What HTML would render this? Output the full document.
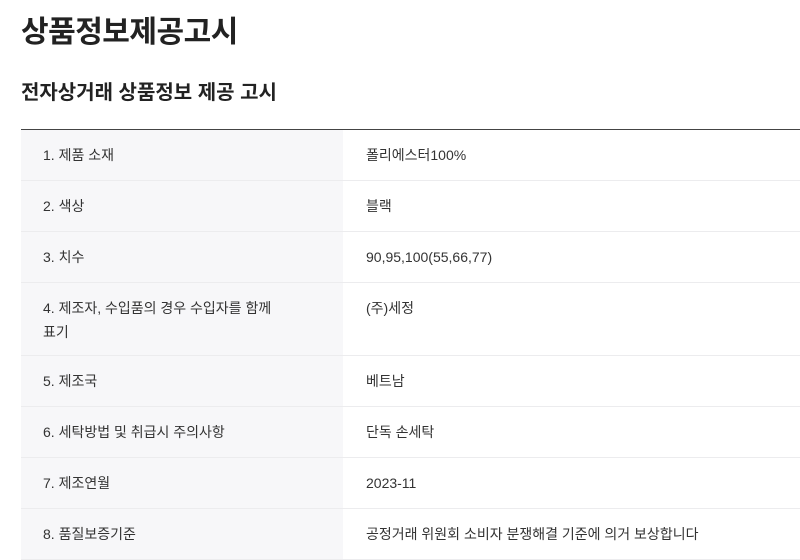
<!DOCTYPE html>
<html><head><meta charset="utf-8"><style>
*{margin:0;padding:0;box-sizing:border-box}
body{width:800px;height:537px;overflow:hidden;background:#fff;font-family:"Liberation Sans","Noto Sans CJK KR",sans-serif;color:#222}
h1{position:absolute;left:21px;top:12px;font-size:30px;font-weight:700;letter-spacing:-0.5px;line-height:42px}
h2{position:absolute;left:21px;top:78px;font-size:20px;font-weight:700;line-height:30px}
table{position:absolute;left:21px;top:129px;width:800px;border-collapse:collapse;border-top:1.5px solid #444}
td{font-size:14px;line-height:24px;padding:13px 0;vertical-align:top;border-bottom:1px solid #ececee;color:#333}
td.k{width:322px;background:#f7f7f9;padding-left:22px;padding-right:20px}
td.v{padding-left:23px}
tr.t td{padding-bottom:11px}
</style></head><body>
<h1>상품정보제공고시</h1>
<h2>전자상거래 상품정보 제공 고시</h2>
<table>
<tr><td class="k">1. 제품 소재</td><td class="v">폴리에스터100%</td></tr>
<tr><td class="k">2. 색상</td><td class="v">블랙</td></tr>
<tr><td class="k">3. 치수</td><td class="v">90,95,100(55,66,77)</td></tr>
<tr class="t"><td class="k">4. 제조자, 수입품의 경우 수입자를 함께<br>표기</td><td class="v">(주)세정</td></tr>
<tr><td class="k">5. 제조국</td><td class="v">베트남</td></tr>
<tr><td class="k">6. 세탁방법 및 취급시 주의사항</td><td class="v">단독 손세탁</td></tr>
<tr><td class="k">7. 제조연월</td><td class="v">2023-11</td></tr>
<tr><td class="k">8. 품질보증기준</td><td class="v">공정거래 위원회 소비자 분쟁해결 기준에 의거 보상합니다</td></tr>
</table>
</body></html>
